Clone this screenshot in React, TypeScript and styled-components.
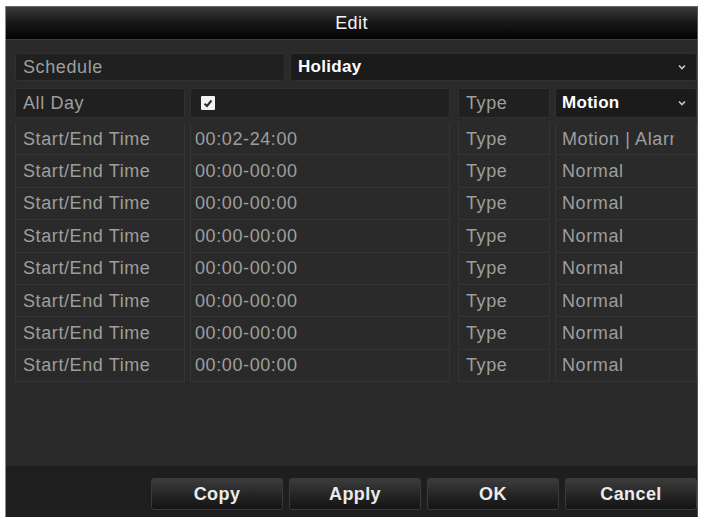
import React from 'react';
import styled, { createGlobalStyle } from 'styled-components';

const GlobalStyle = createGlobalStyle`
  html, body {
    margin: 0;
    padding: 0;
    background: #ffffff;
  }
  body {
    font-family: 'Liberation Sans', Arial, sans-serif;
  }
`;

type Slot = {
  time: string;
  type: string;
};

const slots: Slot[] = [
  { time: '00:02-24:00', type: 'Motion | Alarm' },
  { time: '00:00-00:00', type: 'Normal' },
  { time: '00:00-00:00', type: 'Normal' },
  { time: '00:00-00:00', type: 'Normal' },
  { time: '00:00-00:00', type: 'Normal' },
  { time: '00:00-00:00', type: 'Normal' },
  { time: '00:00-00:00', type: 'Normal' },
  { time: '00:00-00:00', type: 'Normal' },
];

const Chevron: React.FC = () => (
  <svg width="8" height="6" viewBox="0 0 8 6">
    <path d="M1 1.5 L4 4.5 L7 1.5" fill="none" stroke="#c8c8c8" strokeWidth="1.6" />
  </svg>
);

const App: React.FC = () => {
  return (
    <>
      <GlobalStyle />
      <Dialog>
        <TitleBar>Edit</TitleBar>
        <Body>
          <Row height={28}>
            <Cell width={270} variant="label">
              Schedule
            </Cell>
            <Cell width={407} variant="select">
              <Value>Holiday</Value>
              <Chevron />
            </Cell>
          </Row>
          <Row height={30} top={7}>
            <Cell width={170} variant="label">
              All Day
            </Cell>
            <Cell width={260} variant="label" inset={5}>
              <Checkbox>
                <svg width="10" height="9" viewBox="0 0 10 9">
                  <path d="M1.5 4.8 L4 7 L8.5 1.5" fill="none" stroke="#2a2a2a" strokeWidth="2" />
                </svg>
              </Checkbox>
            </Cell>
            <Cell width={92} variant="label" shift={3}>
              Type
            </Cell>
            <Cell width={142} variant="select" inset={6}>
              <Value>Motion</Value>
              <Chevron />
            </Cell>
          </Row>
          <Table>
            {slots.map((s, i) => (
              <Row key={i} height={32.4}>
                <Cell width={170} variant="plain">
                  Start/End Time
                </Cell>
                <Cell width={260} variant="plain" inset={4}>
                  {s.time}
                </Cell>
                <Cell width={92} variant="plain" shift={3}>
                  Type
                </Cell>
                <Cell width={142} variant="plain" inset={6}>
                  <Clip>{s.type}</Clip>
                </Cell>
              </Row>
            ))}
          </Table>
        </Body>
        <ButtonBar>
          <Button>Copy</Button>
          <Button>Apply</Button>
          <Button>OK</Button>
          <Button>Cancel</Button>
        </ButtonBar>
      </Dialog>
    </>
  );
};

export default App;

const Dialog = styled.div`
  margin: 6px 0 0 5px;
  width: 693px;
  height: 511px;
  background: #2a2a2a;
  border-left: 1px solid #8a8a8a;
  border-top: 1px solid #6a6a6a;
  border-right: 1px solid #555;
  box-sizing: border-box;
  display: flex;
  flex-direction: column;
  overflow: hidden;
`;

const TitleBar = styled.div`
  height: 32px;
  flex: none;
  display: flex;
  align-items: center;
  justify-content: center;
  background: linear-gradient(#3a3a3a 0%, #1a1a1a 45%, #020202 100%);
  border-bottom: 1px solid #3c3c3c;
  color: #f4f4f4;
  font-size: 18px;
  letter-spacing: 0.4px;
`;

const Body = styled.div`
  flex: 1;
  padding: 13px 0 0 9px;
  display: flex;
  flex-direction: column;
`;

const Row = styled.div<{ height: number; top?: number }>`
  display: flex;
  gap: 5px;
  height: ${(p) => p.height}px;
  margin-top: ${(p) => p.top ?? 0}px;
`;

const Table = styled.div`
  margin-top: 5px;
  display: flex;
  flex-direction: column;
`;

const Cell = styled.div<{
  width: number;
  variant: 'label' | 'select' | 'plain';
  inset?: number;
  shift?: number;
}>`
  width: ${(p) => p.width}px;
  margin-left: ${(p) => p.shift ?? 0}px;
  box-sizing: border-box;
  display: flex;
  align-items: center;
  justify-content: ${(p) => (p.variant === 'select' ? 'space-between' : 'flex-start')};
  padding: 0 10px 0 ${(p) => p.inset ?? 7}px;
  font-size: 18px;
  letter-spacing: 0.6px;
  color: #9e9e9e;
  white-space: nowrap;
  overflow: hidden;
  border-radius: ${(p) => (p.variant === 'plain' ? '0' : '3px')};
  background: ${(p) =>
    p.variant === 'label' ? '#202020' : p.variant === 'select' ? '#1b1b1b' : 'transparent'};
  border: 1px solid ${(p) => (p.variant === 'plain' ? '#353535' : '#303030')};
  border-top-color: ${(p) => (p.variant === 'plain' ? 'transparent' : '#303030')};
`;

const Clip = styled.span`
  display: block;
  max-width: 112px;
  overflow: hidden;
`;

const Value = styled.span`
  color: #ffffff;
  font-weight: bold;
  font-size: 17px;
  letter-spacing: 0.3px;
`;

const Checkbox = styled.div`
  width: 14px;
  height: 14px;
  margin-left: 5px;
  background: #f2f2f2;
  border-radius: 1px;
  display: flex;
  align-items: center;
  justify-content: center;
`;

const ButtonBar = styled.div`
  height: 52px;
  flex: none;
  background: #1e1e1e;
  border-top: 1px solid #262626;
  display: flex;
  justify-content: flex-end;
  gap: 6px;
  padding: 12px 0 0 0;
  box-sizing: border-box;
`;

const Button = styled.div`
  width: 132px;
  height: 32px;
  box-sizing: border-box;
  display: flex;
  align-items: center;
  justify-content: center;
  border-radius: 3px;
  border: 1px solid #3a3a3a;
  background: linear-gradient(#3c3c3c 0%, #262626 50%, #141414 100%);
  color: #ebebeb;
  font-size: 18px;
  font-weight: bold;
  letter-spacing: 0.4px;
`;
